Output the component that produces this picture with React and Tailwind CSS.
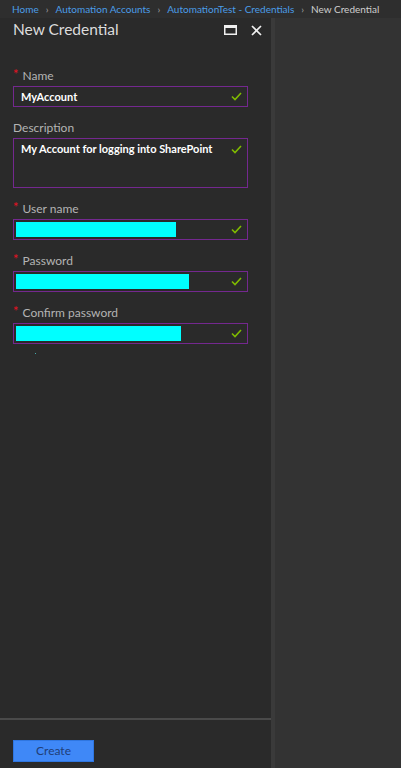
const font = { fontFamily: 'Lato, "Open Sans", sans-serif' }

function Check() {
  return (
    <svg width="11" height="9" viewBox="0 0 11 9" className="shrink-0">
      <path d="M1 4.5 L4 7.5 L10 1" fill="none" stroke="#7fba00" strokeWidth="1.6" />
    </svg>
  )
}

function Label({ children, required }) {
  return (
    <div className="flex h-[14px] items-center text-[12px] text-[#b4b4b4]">
      {required && <span className="mr-[4px] -mt-[4px] text-[13px] leading-none text-[#e81123]">*</span>}
      {children}
    </div>
  )
}

function Field({ label, required, children, tall, mt }) {
  return (
    <div className={mt}>
      <Label required={required}>{label}</Label>
      <div
        className={`mt-[3px] flex justify-between border border-[#74288f] pl-[7px] pr-[5px] ${
          tall ? 'h-[50px] items-start pt-[2px]' : 'h-[21px] items-center'
        }`}
      >
        <div className="min-w-0 flex-1 whitespace-nowrap text-[11px] font-bold leading-[16px] text-white">{children}</div>
        <div className={tall ? 'pt-[4px]' : ''}>
          <Check />
        </div>
      </div>
    </div>
  )
}

function Redacted({ w }) {
  return <div className={`-ml-[5px] h-[15px] bg-[#00ffff] ${w}`} />
}

export default function App() {
  return (
    <div className="flex h-[768px] w-[401px] flex-col bg-[#333333]" style={font}>
      {/* breadcrumb */}
      <div className="flex h-[18px] shrink-0 items-center gap-[7px] whitespace-nowrap bg-[#2e2e2e] pl-[12px] text-[10px]">
        <span className="text-[#4b9de8]">Home</span>
        <span className="text-[#a0a0a0]">›</span>
        <span className="text-[#4b9de8]">Automation Accounts</span>
        <span className="text-[#a0a0a0]">›</span>
        <span className="text-[#4b9de8]">AutomationTest - Credentials</span>
        <span className="text-[#a0a0a0]">›</span>
        <span className="text-[#cfcfcf]">New Credential</span>
      </div>
      <div className="flex flex-1">
        {/* blade */}
        <div className="flex w-[271px] flex-col bg-[#2a2a2a]">
          <div className="flex h-[24px] items-center justify-between pl-[13px] pr-[9px]">
            <span className="text-[15.5px] text-[#dcdcdc]">New Credential</span>
            <div className="flex items-center gap-[14px]">
              <svg width="13" height="10" viewBox="0 0 13 10">
                <rect x="0.75" y="0.75" width="11.5" height="8.5" fill="none" stroke="#f0f0f0" strokeWidth="1.5" />
                <rect x="0" y="0" width="13" height="3" fill="#f0f0f0" />
              </svg>
              <svg width="11" height="11" viewBox="0 0 11 11">
                <path d="M1 1 L10 10 M10 1 L1 10" stroke="#f0f0f0" strokeWidth="1.7" />
              </svg>
            </div>
          </div>
          <div className="flex-1 px-[13px] pt-[27px] pr-[23px]">
            <Field label="Name" required>
              MyAccount
            </Field>
            <Field label="Description" tall mt="mt-[14px]">
              My Account for logging into SharePoint
            </Field>
            <Field label="User name" required mt="mt-[14px]">
              <Redacted w="w-[160px]" />
            </Field>
            <Field label="Password" required mt="mt-[14px]">
              <Redacted w="w-[173px]" />
            </Field>
            <Field label="Confirm password" required mt="mt-[14px]">
              <Redacted w="w-[165px]" />
            </Field>
            <div className="ml-[22px] mt-[9px] h-[1px] w-[1px] bg-[#4aa]" />
          </div>
          <div className="h-[2px] bg-[#4a4a4a]" />
          <div className="h-[48px] px-[13px] pt-[17px]">
            <button className="h-[22px] w-[81px] border border-[#2f76e0] bg-[#3f88f7] text-[12px] text-[#1f3e78]">
              Create
            </button>
          </div>
        </div>
        <div className="w-[4px] bg-[#3a3a3a]" />
      </div>
    </div>
  )
}
